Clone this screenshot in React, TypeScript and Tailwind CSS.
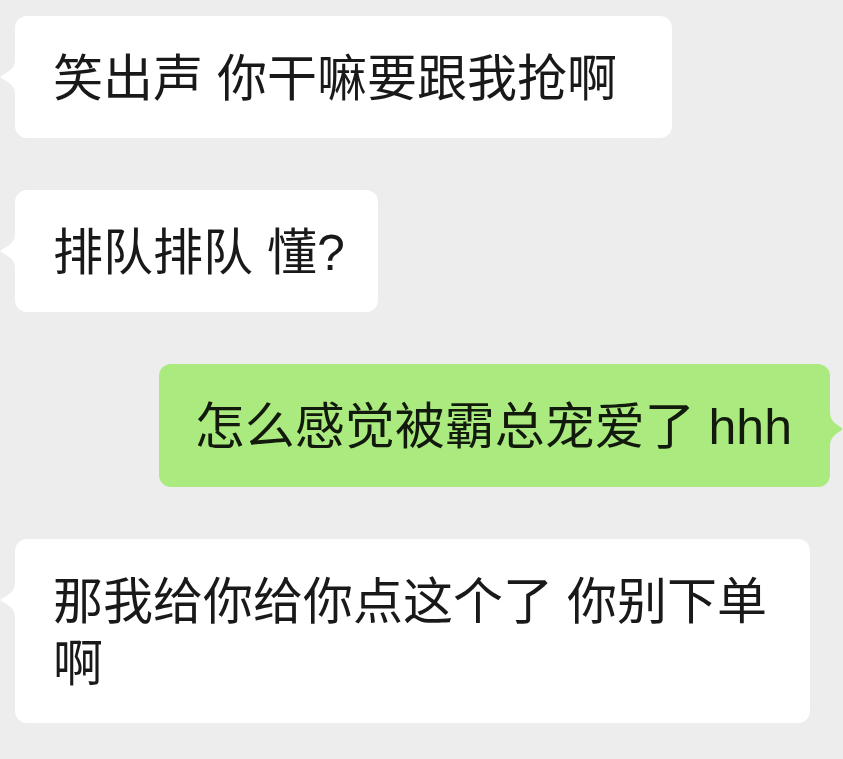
import React from "react";

function TailLeft() {
  return (
    <svg width="15" height="34" viewBox="0 0 15 34" className="mt-[44px] shrink-0 block">
      <path d="M15 0 C15 6 12 9 8 12 L1.2 16 Q0 17 1.2 18 L8 22 C12 25 15 28 15 34 Z" fill="#ffffff" />
    </svg>
  );
}

function TailRight() {
  return (
    <svg width="13" height="34" viewBox="0 0 13 34" className="mt-[48px] shrink-0 block">
      <path d="M0 0 C0 6 2.6 9 6 12 L11.8 16 Q13 17 11.8 18 L6 22 C2.6 25 0 28 0 34 Z" fill="#aaea7f" />
    </svg>
  );
}

function LeftBubble({ text, extra }: { text: string; extra?: string }) {
  return (
    <div className="flex items-start">
      <TailLeft />
      <div
        className={`bg-white rounded-[12px] pl-[38px] pt-[32px] pb-[28px] max-w-[795px] text-[50px] leading-[62px] text-[#191919] ${extra ?? "pr-[38px]"}`}
      >
        {text}
      </div>
    </div>
  );
}

export default function App() {
  return (
    <div
      className="w-[843px] h-[759px] bg-[#ededed] overflow-hidden flex flex-col gap-[52px] pt-[16px]"
      style={{ fontFamily: '"Liberation Sans", "Noto Sans CJK SC", sans-serif' }}
    >
      <LeftBubble text="笑出声 你干嘛要跟我抢啊" extra="pr-[55px]" />
      <LeftBubble text="排队排队 懂?" extra="pr-[33px]" />
      <div className="flex items-start justify-end">
        <div className="bg-[#aaea7f] rounded-[12px] pl-[36px] pr-[38px] pt-[32px] pb-[29px] text-[50px] leading-[62px] text-[#111a0c]">
          怎么感觉被霸总宠爱了 hhh
        </div>
        <TailRight />
      </div>
      <LeftBubble text="那我给你给你点这个了 你别下单啊" />
    </div>
  );
}
